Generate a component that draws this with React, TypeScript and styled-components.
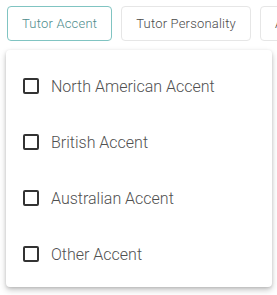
import styled, { createGlobalStyle, css } from "styled-components";

const GlobalStyle = createGlobalStyle`
  html, body {
    margin: 0;
    padding: 0;
    background: #ffffff;
  }
  body {
    font-family: Roboto, "Liberation Sans", sans-serif;
  }
`;

const tabs = ["Tutor Accent", "Tutor Personality", "Age"];
const accents = [
  "North American Accent",
  "British Accent",
  "Australian Accent",
  "Other Accent",
];

const App: React.FC = () => {
  return (
    <Page>
      <GlobalStyle />
      <TabRow>
        {tabs.map((tab, index) => (
          <TabButton key={tab} active={index === 0}>
            {tab}
          </TabButton>
        ))}
      </TabRow>
      <Menu>
        {accents.map((accent) => (
          <Option key={accent}>
            <Box />
            <OptionLabel>{accent}</OptionLabel>
          </Option>
        ))}
      </Menu>
    </Page>
  );
};

export default App;

const Page = styled.div`
  width: 277px;
  height: 295px;
  overflow: hidden;
  padding: 6px 0 0 6px;
  box-sizing: border-box;
`;

const TabRow = styled.div`
  display: flex;
  gap: 9px;
  padding-left: 1px;
  white-space: nowrap;
`;

const TabButton = styled.div(
  ({ active }: { active: boolean }) => css`
    flex-shrink: 0;
    height: 35px;
    box-sizing: border-box;
    display: flex;
    align-items: center;
    padding: 0 14px;
    border-radius: 4px;
    border: 1px solid ${active ? "#80c4c2" : "#e6e6e6"};
    color: ${active ? "#4d8c8c" : "#4a4a4a"};
    font-size: 13px;
    font-weight: 300;
    letter-spacing: 0.2px;
  `
);

const Menu = styled.div`
  margin-top: 9px;
  width: 266px;
  box-sizing: border-box;
  padding: 8px 0 5px;
  background: #ffffff;
  border-radius: 4px;
  box-shadow: 0 3px 6px rgba(0, 0, 0, 0.22), 0 1px 3px rgba(0, 0, 0, 0.12);
`;

const Option = styled.div`
  height: 56px;
  display: flex;
  align-items: center;
  gap: 12px;
  padding-left: 17px;
`;

const Box = styled.div`
  width: 16px;
  height: 16px;
  box-sizing: border-box;
  border: 2px solid #333333;
  border-radius: 2px;
`;

const OptionLabel = styled.span`
  font-size: 16px;
  font-weight: 300;
  color: #505050;
`;
